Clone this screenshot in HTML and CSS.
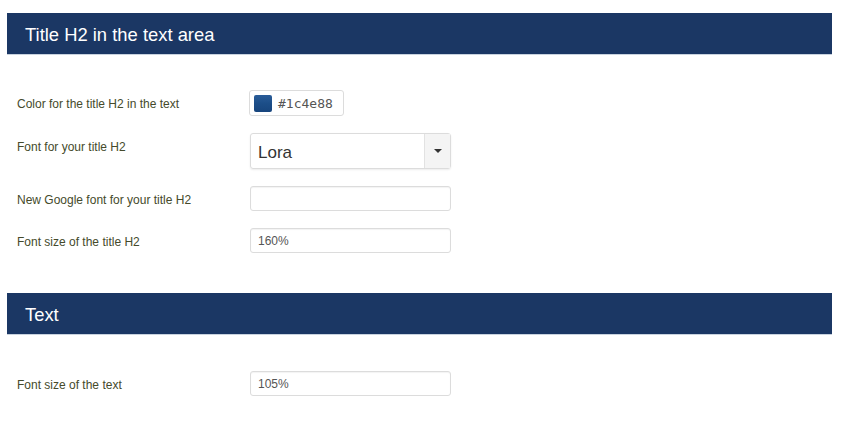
FILE: index.html
```html
<!DOCTYPE html>
<html lang="en">
<head>
    <meta charset="UTF-8">
    <meta name="viewport" content="width=device-width, initial-scale=1.0">
    <title>Template options</title>
    <link rel="stylesheet" href="styles.css">
</head>
<body>
    <main class="options">
        <h2 class="section-title">Title H2 in the text area</h2>
        <div class="fields">
            <div class="field">
                <label for="h2color">Color for the title H2 in the text</label>
                <div class="color-input" id="h2color">
                    <span class="swatch"></span>
                    <span class="color-value">#1c4e88</span>
                </div>
            </div>
            <div class="field">
                <label for="h2font">Font for your title H2</label>
                <div class="select" id="h2font">
                    <span class="select-value">Lora</span>
                    <span class="select-arrow"></span>
                </div>
            </div>
            <div class="field">
                <label for="h2google">New Google font for your title H2</label>
                <input type="text" id="h2google" class="text-input" value="">
            </div>
            <div class="field">
                <label for="h2size">Font size of the title H2</label>
                <input type="text" id="h2size" class="text-input" value="160%">
            </div>
        </div>

        <h2 class="section-title">Text</h2>
        <div class="fields fields-last">
            <div class="field">
                <label for="textsize">Font size of the text</label>
                <input type="text" id="textsize" class="text-input" value="105%">
            </div>
        </div>
    </main>
</body>
</html>
```

FILE: styles.css
```css
body {
    font-family: "Liberation Sans", Arial, sans-serif;
    margin: 0;
    padding: 0;
    background-color: #fff;
}
.options {
    width: 825px;
    margin: 0 0 0 7px;
    padding-top: 13px;
}
.section-title {
    margin: 0;
    height: 42px;
    line-height: 43px;
    padding: 0 18px;
    background-color: #1b3764;
    border-bottom: 1px solid #c8d2de;
    box-sizing: border-box;
    color: #fff;
    font-size: 18.4px;
    font-weight: normal;
}
.fields {
    padding: 35px 0 40px 10px;
    display: flex;
    flex-direction: column;
    gap: 17px;
}
.fields-last {
    padding-top: 36px;
}
.field {
    display: flex;
    align-items: flex-start;
}
.field label {
    width: 233px;
    padding-top: 7px;
    line-height: 14px;
    font-size: 12px;
    color: #454a2b;
}
.text-input {
    width: 201px;
    height: 25px;
    padding: 0 7px;
    margin: 0;
    border: 1px solid #dcdcdc;
    border-radius: 3px;
    box-sizing: border-box;
    font-family: "Liberation Sans", Arial, sans-serif;
    font-size: 12px;
    color: #555;
    box-shadow: inset 0 1px 1px rgba(0, 0, 0, 0.05);
}
.color-input {
    display: flex;
    align-items: center;
    width: 95px;
    height: 26px;
    margin-left: -1px;
    padding: 0 4px;
    border: 1px solid #dcdcdc;
    border-radius: 3px;
    box-sizing: border-box;
}
.swatch {
    width: 18px;
    height: 17px;
    border-radius: 2px;
    background: linear-gradient(#2a5c98, #1c4e88 50%, #17457d);
}
.color-value {
    margin-left: 6px;
    font-family: "DejaVu Sans Mono", "Liberation Mono", monospace;
    font-size: 13px;
    color: #555;
}
.select {
    display: flex;
    width: 201px;
    height: 36px;
    border: 1px solid #dcdcdc;
    border-radius: 3px;
    box-sizing: border-box;
    box-shadow: 0 1px 2px rgba(0, 0, 0, 0.08);
}
.select-value {
    flex: 1;
    padding-left: 7px;
    line-height: 37px;
    font-size: 17px;
    color: #333;
}
.select-arrow {
    width: 25px;
    border-left: 1px solid #e2e2e2;
    background-color: #f4f4f4;
    display: flex;
    align-items: center;
    justify-content: center;
}
.select-arrow::after {
    content: "";
    border-left: 4px solid transparent;
    border-right: 4px solid transparent;
    border-top: 4px solid #333;
}
```
